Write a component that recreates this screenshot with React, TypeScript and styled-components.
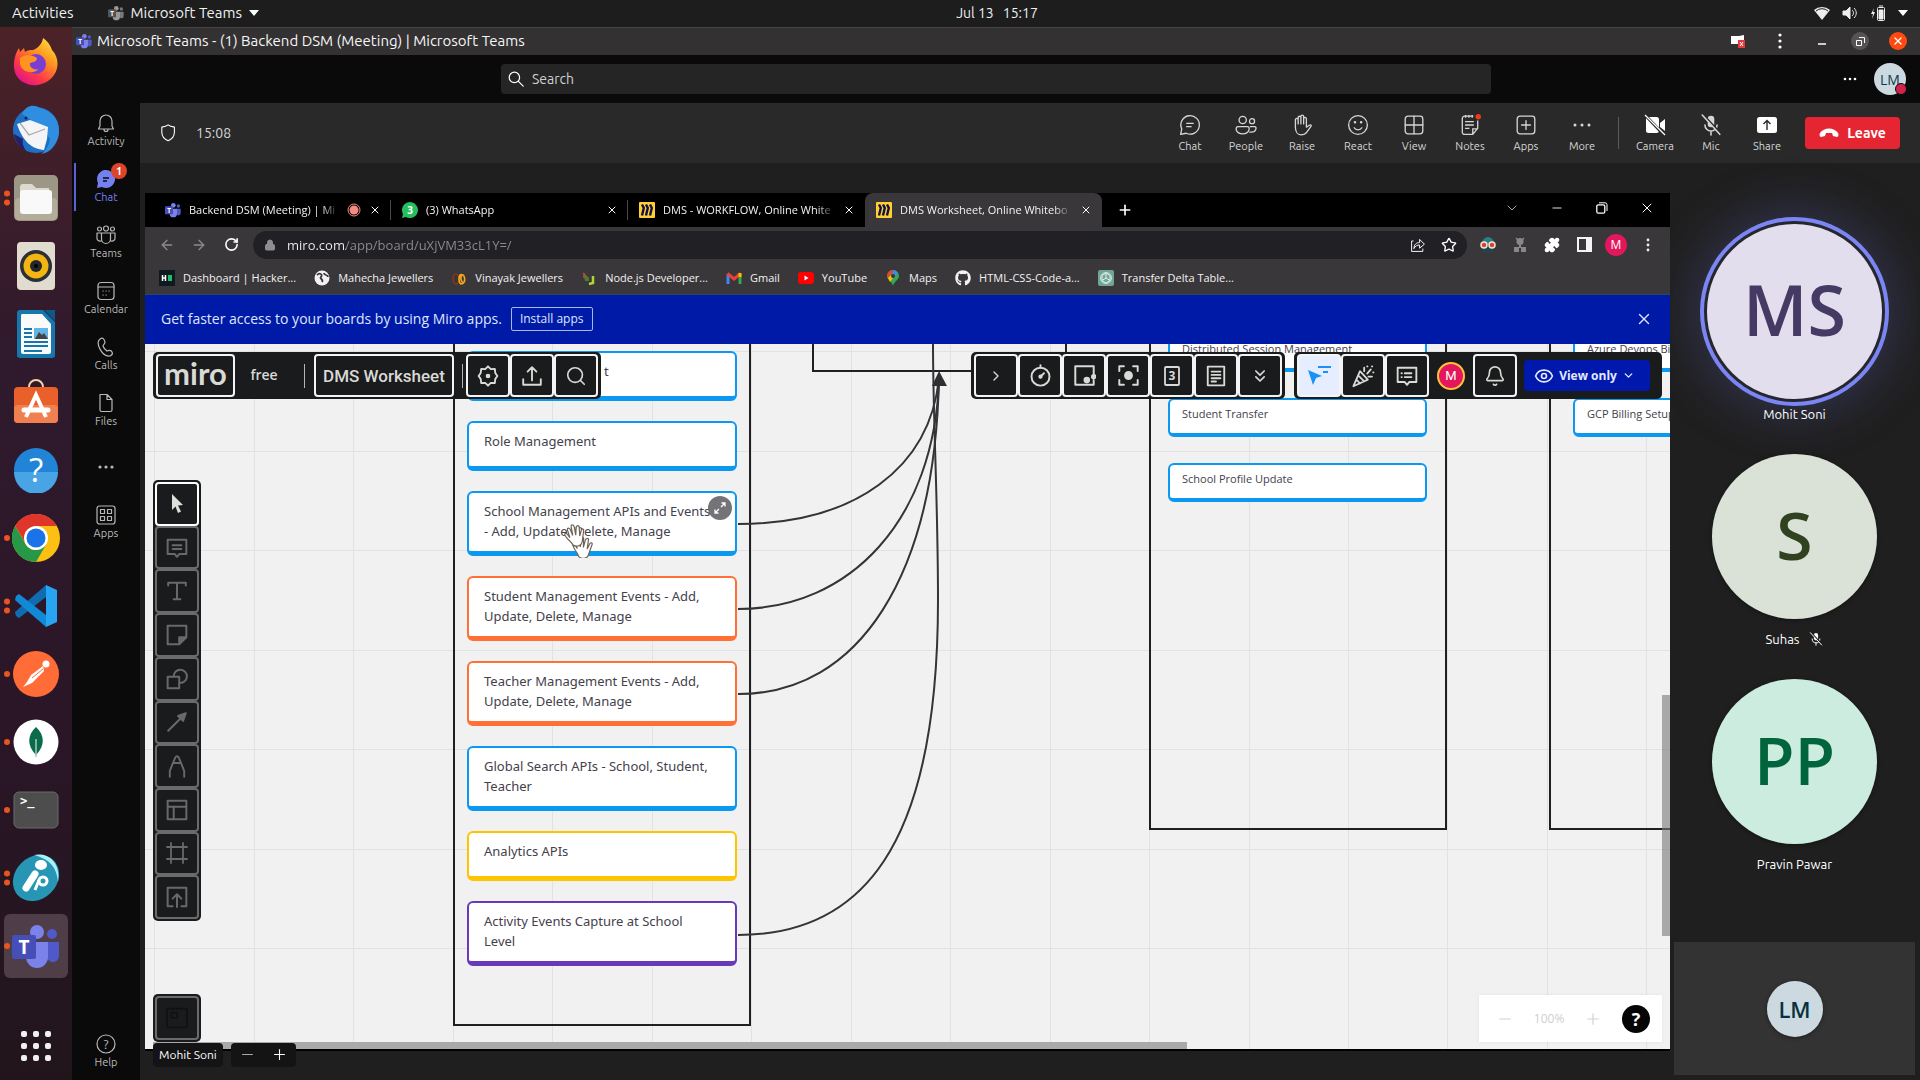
import React from "react";
import styled, { createGlobalStyle, css } from "styled-components";
import {
  ArrowLeft, ArrowRight, RotateCw, Lock, Star, X, Plus, Minus, ChevronDown, ChevronRight, ChevronsDown,
  Search, Bell, Eye, Frame, Puzzle,
} from "lucide-react";
import { FaGithub } from "react-icons/fa";

const Global = createGlobalStyle`
  *, *::before, *::after { box-sizing: border-box; }
  html, body { margin: 0; background: #1f1f1f; }
  body { font-family: Ubuntu, "Noto Sans", "Open Sans", sans-serif; color: #fff; overflow: hidden; }
  button, input { font: inherit; color: inherit; background: none; border: 0; padding: 0; margin: 0; }
  button { cursor: pointer; display: inline-flex; align-items: center; justify-content: center; }
  svg { display: block; flex: none; }
  h1, p { margin: 0; font-weight: 400; }
`;

/* ---------- Shell ---------- */

const Desktop = styled.div`
  display: grid;
  grid-template: 27px minmax(0, 1fr) / 72px minmax(0, 1fr);
  height: 100vh;
`;

const SystemBar = styled.header`
  grid-column: 1 / -1;
  display: grid;
  grid-template-columns: 1fr auto 1fr;
  align-items: center;
  padding: 0 12px 2px;
  background: #1d1d1d;
  font-size: 15px;
  line-height: 20px;
  color: #f0f0f0;
`;
const SystemGroup = styled.div<{ $end?: boolean }>`
  display: flex;
  align-items: center;
  gap: ${(p) => (p.$end ? 12 : 6)}px;
  justify-content: ${(p) => (p.$end ? "flex-end" : "flex-start")};
`;
const AppMenu = styled.button`
  gap: 7px;
  margin-left: 28px;
`;
const Clock = styled.time`
  display: flex;
  gap: 9px;
  padding-left: 74px;
  font-size: 14px;
`;

const Dock = styled.nav`
  display: flex;
  flex-direction: column;
  justify-content: space-between;
  padding-top: 1px;
  background: linear-gradient(#4c2227, #301a2d 30%, #2b1628 65%, #21151b);
`;
const DockButton = styled.button<{ $active?: boolean }>`
  position: relative;
  width: 64px;
  height: 64px;
  margin: 2px 4px;
  border-radius: 6px;
  background: ${(p) => (p.$active ? "#4f3e48" : "none")};
`;
const Running = styled.span`
  position: absolute;
  left: 0;
  top: 50%;
  display: grid;
  gap: 3px;
  transform: translateY(-50%);
  i { width: 6px; height: 6px; border-radius: 50%; background: #e95420; }
`;

const Window = styled.div`
  display: grid;
  grid-template: 28px 48px minmax(0, 1fr) / 68px minmax(0, 1fr);
`;
const TitleBar = styled.div`
  grid-column: 1 / -1;
  display: flex;
  align-items: center;
  gap: 5px;
  padding: 0 13px 1px 4px;
  border-top: 1px solid #464344;
  background: #333132;
`;
const WindowTitle = styled.h1`
  flex: 1;
  font-size: 15px;
  line-height: 20px;
  color: #f6f6f6;
`;
const TitleActions = styled.div`
  display: flex;
  align-items: center;
  gap: 20px;
`;
const MenuButton = styled.button`
  width: 26px;
`;
const RoundButton = styled.button<{ $bg: string }>`
  width: 18px;
  height: 18px;
  border-radius: 50%;
  background: ${(p) => p.$bg};
`;

const SearchRow = styled.div`
  grid-column: 1 / -1;
  display: grid;
  grid-template-columns: 1fr minmax(0, 990px) 1fr;
  align-items: center;
  padding: 0 14px;
  background: #0a0a0a;
`;
const SearchBox = styled.label`
  grid-column: 2;
  display: flex;
  align-items: center;
  gap: 8px;
  height: 30px;
  padding: 0 7px;
  border-radius: 4px;
  background: #252525;
  font-size: 14px;
  input { flex: 1; outline: 0; }
  input::placeholder { color: #d0d0d0; opacity: 1; }
`;
const SearchEnd = styled.div`
  display: flex;
  align-items: center;
  justify-content: flex-end;
  gap: 17px;
`;
const Profile = styled.button`
  position: relative;
  width: 32px;
  height: 32px;
  border-radius: 50%;
  background: #cdd9e0;
  color: #0b3d4c;
  font: 500 14px "Open Sans", sans-serif;
`;
const Presence = styled.span`
  position: absolute;
  right: -1px;
  bottom: 0;
  width: 12px;
  height: 12px;
  border: 1px solid #0a0a0a;
  border-radius: 50%;
  background: #d2254a;
`;

const Rail = styled.nav`
  display: flex;
  flex-direction: column;
  background: #0a0a0a;
`;
const RailButton = styled.button<{ $active?: boolean; $last?: boolean }>`
  position: relative;
  flex-direction: column;
  gap: 1px;
  width: 100%;
  height: 56px;
  font-size: 11px;
  line-height: 15px;
  color: ${(p) => (p.$active ? "#7580f0" : "#b8b8b8")};
  margin-top: ${(p) => (p.$last ? "auto" : "0")};
  ${(p) => p.$active && css`
    &::before {
      content: "";
      position: absolute;
      left: 2px;
      top: 4px;
      bottom: 4px;
      width: 2px;
      background: #5b62d6;
    }
  `}
`;
const CountBadge = styled.span`
  position: absolute;
  left: 39px;
  top: 4px;
  width: 16px;
  height: 16px;
  border-radius: 50%;
  background: #dc442c;
  color: #fff;
  font-weight: 700;
  line-height: 16px;
`;

const Meeting = styled.main`
  display: grid;
  grid-template-rows: 60px minmax(0, 1fr);
  background: #1f1f1f;
`;
const CallBar = styled.div`
  display: flex;
  align-items: center;
  padding: 0 20px;
  background: #292929;
`;
const Elapsed = styled.span`
  flex: 1;
  margin-left: 18px;
  font-size: 14px;
  color: #d6d6d6;
`;
const CallButton = styled.button`
  flex-direction: column;
  gap: 2px;
  width: 56px;
  padding-top: 1px;
  font-size: 11px;
  line-height: 16px;
  color: #d6d6d6;
`;
const CallDivider = styled.span`
  width: 1px;
  height: 32px;
  margin: 0 8px;
  background: #5c5c5c;
`;
const Leave = styled.button`
  gap: 8px;
  width: 95px;
  height: 32px;
  margin-left: 10px;
  border-radius: 4px;
  background: #e62533;
  font-size: 14px;
  font-weight: 700;
`;

const Stage = styled.div`
  display: grid;
  grid-template-columns: minmax(0, 1fr) 250px;
  min-height: 0;
`;
const ShareArea = styled.section`
  position: relative;
  display: flex;
  padding: 30px 0 29px 5px;
  min-height: 0;
`;
const ShareControls = styled.div`
  position: absolute;
  left: 13px;
  bottom: 13px;
  display: flex;
  gap: 8px;
`;
const ShareChip = styled.div<{ $tools?: boolean }>`
  display: flex;
  align-items: center;
  gap: 15px;
  height: 24px;
  padding: 0 ${(p) => (p.$tools ? 8 : 6)}px 2px;
  border-radius: 4px;
  background: #141414;
  font-size: 12px;
`;

const People = styled.aside`
  display: flex;
  flex-direction: column;
  padding: 38px 5px 5px 4px;
`;
const Person = styled.figure`
  display: flex;
  flex-direction: column;
  align-items: center;
  height: 225px;
  margin: 0;
  font-size: 13px;
  line-height: 18px;
`;
const FaceArea = styled.div`
  display: flex;
  flex-direction: column;
  justify-content: center;
  height: 204px;
  padding-top: 16px;
`;
const Face = styled.div<{ $bg: string; $fg: string; $size: number; $speaking?: boolean }>`
  display: flex;
  align-items: center;
  justify-content: center;
  width: ${(p) => p.$size}px;
  height: ${(p) => p.$size}px;
  padding-bottom: ${(p) => (p.$size > 100 ? 4 : 0)}px;
  border-radius: 50%;
  background: ${(p) => p.$bg};
  color: ${(p) => p.$fg};
  font: 600 ${(p) => Math.round(p.$size * 0.4)}px "Open Sans", sans-serif;
  box-shadow: ${(p) => (p.$speaking ? "0 0 0 3px #26262e, 0 0 0 7px #7b86f4, 0 0 50px 16px rgba(98,100,190,.28)" : "0 1px 4px rgba(0,0,0,.4)")};
`;
const PersonName = styled.figcaption`
  display: flex;
  align-items: center;
  gap: 10px;
`;
const SelfView = styled.div`
  display: flex;
  align-items: center;
  justify-content: center;
  height: 133px;
  margin-top: auto;
  background: #333;
`;

/* ---------- Shared browser ---------- */

const Browser = styled.div`
  flex: 1;
  min-width: 0;
  display: flex;
  flex-direction: column;
  border-bottom: 2px solid #000;
  background: #39373a;
  font-family: "Segoe UI", "Open Sans", sans-serif;
`;
const TabStrip = styled.div`
  display: flex;
  align-items: center;
  height: 34px;
  padding-left: 9px;
  background: #000;
`;
const Tab = styled.div<{ $active?: boolean; $rule?: boolean }>`
  display: flex;
  align-items: center;
  gap: 8px;
  width: 237px;
  height: 34px;
  padding: 0 10px 1px 11px;
  border-radius: 8px 8px 0 0;
  background: ${(p) => (p.$active ? "#39373a" : p.$rule ? "linear-gradient(#4a4a4a, #4a4a4a) right center / 1px 20px no-repeat" : "none")};
`;
const TabTitle = styled.span`
  flex: 1;
  overflow: hidden;
  white-space: nowrap;
  font-size: 11px;
  color: #f2f2f2;
  mask-image: linear-gradient(90deg, #000 calc(100% - 18px), transparent);
`;
const NewTab = styled.button`
  width: 46px;
  height: 34px;
`;
const WindowControls = styled.div`
  display: flex;
  margin: 0 1px 4px auto;
  button { width: 45px; height: 30px; }
`;
const AddressRow = styled.div`
  display: flex;
  align-items: center;
  height: 36px;
  padding: 0 6px 1px;
`;
const NavButton = styled.button`
  width: 32px;
  height: 28px;
`;
const Omnibox = styled.label`
  flex: 1;
  display: flex;
  align-items: center;
  gap: 11px;
  height: 28px;
  margin: 0 5px 0 6px;
  padding: 0 8px 0 11px;
  border-radius: 14px;
  background: #212024;
  font-size: 13px;
  input {
    flex: 1;
    outline: 0;
    color: transparent;
    background: linear-gradient(90deg, #f2f2f2 59px, #8d8d90 59px);
    background-clip: text;
    -webkit-background-clip: text;
  }
  ${NavButton} { width: 20px; }
`;
const Initial = styled.span`
  display: grid;
  place-items: center;
  width: 22px;
  height: 22px;
  border-radius: 50%;
  background: #e3175c;
  font-size: 12px;
`;
const Bookmarks = styled.nav`
  display: flex;
  align-items: center;
  gap: 18px;
  height: 32px;
  padding: 0 14px 2px;
  border-bottom: 1px solid #2c4560;
`;
const Bookmark = styled.a`
  display: flex;
  align-items: center;
  gap: 8px;
  color: #f2f2f2;
  font-size: 11px;
  line-height: 16px;
  text-decoration: none;
  white-space: nowrap;
`;
const Banner = styled.div`
  display: flex;
  align-items: center;
  gap: 9px;
  height: 49px;
  padding: 0 17px 2px 16px;
  background: #001aa8;
  font-family: "Open Sans", sans-serif;
  font-size: 14px;
  color: #dfe6ff;
  > :last-child { margin-left: auto; }
`;
const InstallButton = styled.button`
  height: 24px;
  padding: 0 8px;
  border: 1px solid #a8b8ee;
  border-radius: 2px;
  font-size: 12px;
`;

/* ---------- Board ---------- */

const Board = styled.div`
  position: relative;
  flex: 1;
  overflow: hidden;
  background: #f1f1f2;
  font-family: "Open Sans", sans-serif;
`;
const BoardDrawing = styled.svg`
  position: absolute;
  left: 0;
  top: 0;
`;
const Column = styled.div<{ $x: number; $y: number; $w: number }>`
  position: absolute;
  left: ${(p) => p.$x}px;
  top: ${(p) => p.$y}px;
  width: ${(p) => p.$w}px;
  display: grid;
  gap: ${(p) => (p.$w > 260 ? 20 : 26)}px;
`;
const Card = styled.article<{ $color: string; $small?: boolean; $tall?: boolean }>`
  position: relative;
  height: ${(p) => (p.$small ? 39 : p.$tall ? 65 : 50)}px;
  padding: ${(p) => (p.$small ? "6px 12px" : "8px 15px")};
  border: 2px solid ${(p) => p.$color};
  border-bottom-width: ${(p) => (p.$small ? 4 : 5)}px;
  border-radius: 6px;
  background: #fff;
  color: #44414c;
  font-family: ${(p) => (p.$small ? `"Open Sans"` : `"Noto Sans"`)}, sans-serif;
  font-size: ${(p) => (p.$small ? 11 : 13)}px;
  line-height: ${(p) => (p.$small ? 16 : 20)}px;
  white-space: pre;
`;
const CardTail = styled.span`
  padding-left: 120px;
`;
const Expand = styled.button`
  position: absolute;
  right: 3px;
  top: 3px;
  width: 24px;
  height: 24px;
  border-radius: 50%;
  background: rgba(92, 92, 96, .85);
`;
const Cursor = styled.svg`
  position: absolute;
  left: 418px;
  top: 178px;
`;

const Panel = styled.div`
  display: flex;
  align-items: center;
  height: 47px;
  padding: 0 3px;
  border-radius: 5px;
  background: #1a1b1d;
  color: #d9d9d6;
`;
const PanelRow = styled.div`
  position: absolute;
  top: 8px;
  left: 8px;
  right: 8px;
  display: flex;
  gap: 9px;
  > :nth-child(2) { margin-left: auto; }
`;
const Tool = styled.button<{ $w?: number; $lit?: boolean }>`
  width: ${(p) => p.$w ?? 44}px;
  height: 43px;
  border: 2px solid #f4f4f4;
  border-radius: 4px;
  background: ${(p) => (p.$lit ? "#e6edff" : "#1a1b1d")};
`;
const Wordmark = styled.span`
  font: 700 31px/30px Lato, sans-serif;
  padding-bottom: 5px;
`;
const BoardName = styled.span`
  font: 500 17px Roboto, sans-serif;
`;
const Plan = styled.span`
  width: 58px;
  margin-right: 11px;
  padding-bottom: 2px;
  text-align: center;
  font-size: 14px;
  font-weight: 600;
`;
const Rule = styled.span<{ $lead?: number; $tail: number }>`
  width: 1px;
  height: 24px;
  margin: 0 ${(p) => p.$tail}px 0 ${(p) => p.$lead ?? 0}px;
  background: #b5b5b5;
`;
const Member = styled.button`
  width: 28px;
  height: 28px;
  margin: 0 8px;
  border: 2px solid #ffc23d;
  border-radius: 50%;
  background: #e3175c;
  font: 13px Roboto, sans-serif;
  color: #fff;
`;
const ViewOnly = styled.button`
  gap: 5px;
  width: 126px;
  height: 31px;
  margin: 0 9px 0 7px;
  padding-right: 5px;
  border-radius: 4px;
  background: #0019ac;
  font-size: 12px;
  font-weight: 700;
  color: #e4e9ff;
`;
const Palette = styled.div`
  position: absolute;
  left: 8px;
  top: 136px;
  display: flex;
  flex-direction: column;
  height: 441px;
  width: 48px;
  padding: 2px;
  border-radius: 5px;
  background: #1a1b1d;
`;
const PaletteTool = styled.button<{ $on?: boolean }>`
  flex: 1;
  border: 2px solid ${(p) => (p.$on ? "#fff" : "#6b6b6d")};
  border-radius: 4px;
  color: ${(p) => (p.$on ? "#dededb" : "#69696b")};
`;
const MiniMap = styled(Palette)`
  top: auto;
  bottom: 7px;
  height: 48px;
  button { color: #101112; }
`;
const ZoomBar = styled.div`
  position: absolute;
  right: 8px;
  bottom: 7px;
  display: flex;
  align-items: center;
  justify-content: space-between;
  width: 183px;
  height: 47px;
  padding: 0 12px 0 17px;
  background: #fff;
  box-shadow: 0 0 4px rgba(0, 0, 0, .06);
  color: #cfcfcf;
  font-size: 12px;
`;
const HelpButton = styled.button`
  width: 28px;
  height: 28px;
  border-radius: 50%;
  background: #050505;
  color: #fff;
  font-size: 18px;
  font-weight: 700;
`;
const ScrollX = styled.div`
  position: absolute;
  left: 8px;
  bottom: 0;
  width: 1034px;
  height: 7px;
  background: #a9a9a9;
`;
const ScrollY = styled.div`
  position: absolute;
  right: 0;
  top: 351px;
  width: 8px;
  height: 241px;
  background: rgba(120, 120, 122, .6);
`;

/* ---------- Drawings ---------- */

type IconProps = { size?: number; children?: React.ReactNode; sw?: number; vb?: number };
const Line = ({ size = 20, children, sw = 1.2, vb = 20 }: IconProps) => (
  <svg width={size} height={size} viewBox={`0 0 ${vb} ${vb}`} fill="none" stroke="currentColor" strokeWidth={sw} strokeLinecap="round" strokeLinejoin="round" aria-hidden="true">
    {children}
  </svg>
);
const Dots = ({ vertical }: { vertical?: boolean }) => (
  <svg width="20" height="20" viewBox="0 0 20 20" fill="currentColor">
    {[4, 10, 16].map((n) => <circle key={n} cx={vertical ? 10 : n} cy={vertical ? n : 10} r="1.6" />)}
  </svg>
);

const TeamsLogo = ({ size, grey }: { size: number; grey?: boolean }) => (
  <svg width={size} height={size} viewBox="0 0 48 48">
    <circle cx="40" cy="12" r="5" fill={grey ? "#777" : "#5059c9"} />
    <path d="M35 20h12v13a6 6 0 0 1-12 2z" fill={grey ? "#777" : "#5059c9"} />
    <circle cx="25" cy="10" r="7" fill={grey ? "#999" : "#7b83eb"} />
    <path d="M14 20h22v15a11 11 0 0 1-22 0z" fill={grey ? "#999" : "#7b83eb"} />
    <rect x="0" y="13" width="24" height="24" rx="2" fill={grey ? "#555" : "#464eb8"} />
    <text x="12" y="32" textAnchor="middle" fontFamily="Open Sans, sans-serif" fontWeight="700" fontSize="19" fill="#fff">T</text>
  </svg>
);

const MiroMark = () => (
  <svg width="16" height="16" viewBox="0 0 16 16">
    <rect width="16" height="16" rx="1" fill="#ffd02f" />
    <path d="M3 2.500l1.800 3.500L3 13.500M7 2.500l1.800 3.500L7 13.500M11 2.500l1.800 3.500-1.800 7.500" stroke="#12104a" strokeWidth="2.400" fill="none" />
  </svg>
);

const MicOff = ({ size = 20, back = "#292929" }: { size?: number; back?: string }) => (
  <svg width={size} height={size} viewBox="0 0 20 20" fill="none" stroke="currentColor" strokeWidth="1.4" strokeLinecap="round">
    <rect x="7" y="1.5" width="6" height="10.5" rx="3" fill="currentColor" stroke="none" />
    <path d="M4.5 10a5.5 5.5 0 0 0 11 0M10 15.5V19" />
    <path d="M3 1l16 17" stroke={back} strokeWidth="2" />
    <path d="M2 1l16 17.500" />
  </svg>
);

const ChatBubble = () => (
  <Line size={22}><path d="M1.500 18.500l1-5A8.400 8.400 0 1 1 6.500 17.500zM7 8.500h6M7 11.500h4" /></Line>
);

const dockItems: { name: string; dots: number; active?: boolean; art: React.ReactNode }[] = [
  {
    name: "Firefox", dots: 0,
    art: (
      <svg width="46" height="50" viewBox="0 0 46 50">
        <defs>
          <linearGradient id="ff" x1="1" y1="0" x2=".3" y2="1"><stop offset="0" stopColor="#fff04a" /><stop offset=".4" stopColor="#ff9a1f" /><stop offset=".75" stopColor="#ff3b45" /><stop offset="1" stopColor="#e31587" /></linearGradient>
        </defs>
        <path d="M30 1c6 4 8 9 9 12 7 7 7 18 2 25-6 9-19 13-29 8C2 42-1 31 2 20c1-4 2-6 4-9l1 4 4-4 1 4c3-2 5-2 8-2 5-2 9-6 10-12z" fill="url(#ff)" />
        <circle cx="23" cy="27" r="10" fill="#7a3fd2" />
        <path d="M7 21c6-4 12-3 17 0 0 4-4 4-7 5-1 4 4 8 9 6-7 6-17 3-19-5z" fill="#ff9520" />
      </svg>
    ),
  },
  {
    name: "Thunderbird", dots: 0,
    art: (
      <svg width="48" height="52" viewBox="0 0 48 52">
        <circle cx="24" cy="26" r="23" fill="#1f6fc4" />
        <path d="M10 10c4-9 12-10 18-6 14 3 20 14 19 26-2 12-10 19-18 20 7-5 8-10 9-15-8-13-18-18-28-25z" fill="#2f8ee0" />
        <path d="M5 20l13-4 18 7-1 12-3 11C20 45 11 38 5 20z" fill="#f4f4f6" />
        <path d="M8 19l9 12 16-6" fill="none" stroke="#aaa" strokeWidth="1.300" />
        <path d="M2 30c1 8 6 14 12 17-3-5-4-8-3-12z" fill="#26206b" />
        <circle cx="14" cy="14" r="1.500" fill="#0b2b55" />
      </svg>
    ),
  },
  {
    name: "Files", dots: 2,
    art: (
      <svg width="46" height="48" viewBox="0 0 46 48">
        <rect x="1" y="1" width="44" height="46" rx="5" fill="#9c9684" /><rect x="2" y="24" width="42" height="22" rx="4" fill="#b3ac99" />
        <path d="M7 13a3 3 0 0 1 3-3h9l4 4h13v8H7z" fill="#dcd9cf" />
        <rect x="7" y="16" width="32" height="24" rx="3" fill="#f9f9f9" />
      </svg>
    ),
  },
  {
    name: "Rhythmbox", dots: 0,
    art: (
      <svg width="38" height="48" viewBox="0 0 38 48">
        <rect width="38" height="48" rx="4" fill="#e0dcd0" /><circle cx="19" cy="24" r="16" fill="#2c2f36" />
        <circle cx="19" cy="24" r="12.500" fill="#f3b512" /><circle cx="19" cy="24" r="6" fill="#24272b" /><circle cx="19" cy="24" r="2" fill="#000" />
      </svg>
    ),
  },
  {
    name: "LibreOffice Writer", dots: 0,
    art: (
      <svg width="38" height="48" viewBox="0 0 38 48">
        <path d="M3 0h23l12 12v33a3 3 0 0 1-3 3H3a3 3 0 0 1-3-3V3a3 3 0 0 1 3-3z" fill="#1677ad" />
        <path d="M5 4h20l9 10v28a2 2 0 0 1-2 2H6a2 2 0 0 1-2-2V5z" fill="#fafafa" /><path d="M27 0h11v11z" fill="#0d5884" />
        <path d="M7 19h8M7 23h8M7 27h8M7 32h24M7 36h24M7 41h18" stroke="#1677ad" strokeWidth="2" />
        <rect x="17" y="18" width="14" height="11" fill="#62b4e4" /><path d="M18 29l4-7 3 3 2-2 4 6z" fill="#444" />
      </svg>
    ),
  },
  {
    name: "Ubuntu Software", dots: 0,
    art: (
      <svg width="46" height="46" viewBox="0 0 46 46">
        <path d="M16 12V8a7 7 0 0 1 14 0v4" fill="none" stroke="#f5d3a4" strokeWidth="2" />
        <rect x="1" y="8" width="44" height="36" rx="4" fill="#e9602a" /><rect x="1" y="26" width="44" height="18" rx="4" fill="#f08050" />
        <path d="M13 38l10-22 10 22" fill="none" stroke="#fff" strokeWidth="4" /><path d="M11 31h24" stroke="#fff" strokeWidth="5" strokeLinecap="round" />
      </svg>
    ),
  },
  {
    name: "Help", dots: 0,
    art: (
      <svg width="46" height="46" viewBox="0 0 46 46">
        <circle cx="23" cy="23" r="22" fill="#2284d6" /><path d="M1 25h44a22 22 0 0 1-44 0z" fill="#48a4e4" />
        <text x="23" y="35" textAnchor="middle" fontSize="33" fontFamily="Open Sans, sans-serif" fill="#fff">?</text>
      </svg>
    ),
  },
  {
    name: "Google Chrome", dots: 1,
    art: (
      <svg width="48" height="48" viewBox="0 0 48 48">
        <circle cx="24" cy="24" r="24" fill="#fbc011" />
        <path d="M3.200 12A24 24 0 0 1 44.800 12H24L14 30z" fill="#e0352b" />
        <path d="M3.200 12A24 24 0 0 0 24 48l10.400-18L24 36a12 12 0 0 1-10.400-6z" fill="#279847" />
        <circle cx="24" cy="24" r="12" fill="#fff" /><circle cx="24" cy="24" r="9.500" fill="#1a73e8" />
      </svg>
    ),
  },
  {
    name: "Visual Studio Code", dots: 2,
    art: (
      <svg width="42" height="42" viewBox="0 0 42 42">
        <path d="M31 0L0 27l1 4 3 2L31 12z" fill="#0f6cb0" /><path d="M31 42L0 15l1-4 3-2 27 21z" fill="#1189d4" />
        <path d="M31 0l11 5v32l-11 5z" fill="#27a5f2" />
      </svg>
    ),
  },
  {
    name: "Postman", dots: 1,
    art: (
      <svg width="46" height="46" viewBox="0 0 46 46">
        <circle cx="23" cy="23" r="23" fill="#ff6c37" /><circle cx="33" cy="13" r="3.500" fill="#fff" />
        <path d="M30 15l-12 9-4 7-4 5 9-4 12-12z" fill="#fff" /><path d="M19 27l11-9" stroke="#ff6c37" />
      </svg>
    ),
  },
  {
    name: "MongoDB Compass", dots: 1,
    art: (
      <svg width="46" height="46" viewBox="0 0 46 46">
        <circle cx="23" cy="23" r="22.500" fill="#fff" /><path d="M23 8c9 8 9 19 0 28-9-9-9-20 0-28z" fill="#0a6b4b" /><path d="M23 20v18" stroke="#a9c9bd" strokeWidth="1.500" />
      </svg>
    ),
  },
  {
    name: "Terminal", dots: 1,
    art: (
      <svg width="46" height="38" viewBox="0 0 46 38">
        <rect x="1" y="1" width="44" height="36" rx="5" fill="#4d4d4d" stroke="#6b6b6b" />
        <text x="7" y="14" fontFamily="DejaVu Sans Mono, monospace" fontWeight="700" fontSize="12" fill="#fff">&gt;_</text>
      </svg>
    ),
  },
  {
    name: "IP Messenger", dots: 2,
    art: (
      <svg width="48" height="48" viewBox="0 0 48 48">
        <ellipse cx="24" cy="24" rx="25" ry="21" transform="rotate(-45 24 24)" fill="#2796b4" />
        <path d="M22 1c14-3 27 7 24 27-1-14-8-23-24-27z" fill="#a9f1f5" />
        <ellipse cx="29" cy="11" rx="6" ry="5" fill="#fff" /><path d="M23 20l-9 14" stroke="#fff" strokeWidth="7" strokeLinecap="round" />
        <circle cx="31" cy="27" r="4" fill="none" stroke="#fff" strokeWidth="3" /><path d="M27 26l-4 10" stroke="#fff" strokeWidth="3" />
      </svg>
    ),
  },
  { name: "Microsoft Teams", dots: 1, active: true, art: <TeamsLogo size={48} /> },
];

const railItems: { label: string; active?: boolean; badge?: string; icon: React.ReactNode }[] = [
  { label: "Activity", icon: <Line><path d="M4 13V8a6 6 0 0 1 12 0v5l1.500 3h-15zM8 16.500a2 2 0 0 0 4 0" /></Line> },
  {
    label: "Chat", active: true, badge: "1",
    icon: <svg width="20" height="20" viewBox="0 0 20 20"><path d="M1 19l1-5A9 9 0 1 1 6 18z" fill="#7580f0" /><path d="M7 9h6M7 12h4" stroke="#0a0a0a" strokeWidth="1.300" /></svg>,
  },
  { label: "Teams", icon: <Line><circle cx="3.500" cy="4" r="2" /><circle cx="10" cy="3.500" r="2.500" /><circle cx="16.500" cy="4" r="2" /><path d="M5.500 8h9v6a4.500 4.500 0 0 1-9 0zM5 8H1v5a3 3 0 0 0 4 3M15 8h4v5a3 3 0 0 1-4 3" /></Line> },
  { label: "Calendar", icon: <Line><rect x="2" y="1.500" width="16" height="17" rx="3" /><path d="M2 6h16M7 10h.2M10 10h.2M13 10h.2M7 14h.2M10 14h.2" /></Line> },
  { label: "Calls", icon: <Line><path d="M4 2c3-2 4 0 5 3 0 2-2 3-2 4 1 3 3 4 4 5 2-1 4-1 5 1 1 2 0 3-2 4C6 20-1 6 4 2z" /></Line> },
  { label: "Files", icon: <Line><path d="M4 1.500h7l5 5V17a1.500 1.500 0 0 1-1.500 1.500h-9A1.500 1.500 0 0 1 4 17zM11 1.500V6.500h5" /></Line> },
  { label: "", icon: <Dots /> },
  { label: "Apps", icon: <Line><rect x="1" y="1" width="18" height="18" rx="2.500" /><rect x="4.500" y="4.500" width="4" height="4" /><rect x="11.500" y="4.500" width="4" height="4" /><rect x="4.500" y="11.500" width="4" height="4" /><rect x="11.500" y="11.500" width="4" height="4" /></Line> },
];

const callActions: [string, React.ReactNode][] = [
  ["Chat", <ChatBubble />],
  ["People", <Line size={22}><circle cx="7" cy="5.500" r="3.300" /><circle cx="15.500" cy="6.500" r="2.300" /><path d="M3 11.500h8.500c2.500 0 2 6.500-4.500 6.500S-.5 11.500 3 11.500zM14 11.500h4c2 0 1.500 5-3 5h-1.500" /></Line>],
  ["Raise", <Line size={22}><path d="M4 12V5a1.300 1.300 0 0 1 2.500 0v4V3A1.300 1.300 0 0 1 9 3v6V2a1.300 1.300 0 0 1 2.500 0v7V4A1.300 1.300 0 0 1 14 4v8l3-2c1-.5 2 .5 1 1.500L14 17c-1 1.500-3 2-5 2-3 0-5-3-5-7z" /></Line>],
  ["React", <Line size={22}><circle cx="10" cy="10" r="8.500" /><path d="M6.500 12.500c1.500 2.500 5.500 2.500 7 0" /><path d="M7.200 7.500h.1M12.800 7.500h.1" strokeWidth="2.200" /></Line>],
  ["View", <Line size={22}><rect x="2" y="2" width="16" height="16" rx="2.500" /><path d="M10 2v16M2 10h16" /></Line>],
  ["Notes", <svg width="22" height="22" viewBox="0 0 20 20" fill="none" stroke="currentColor" strokeWidth="1.200"><path d="M17 6v7l-4.500 5.500H5a2 2 0 0 1-2-2V4a2 2 0 0 1 2-2h8M12.500 18v-4.500H17M5.500 7h8M5.500 10h8M5.500 13h4M6 1v2.500M9 1v2.500M12 1v2.500" /><circle cx="17.500" cy="2.500" r="2.500" fill="#f03a17" stroke="none" /></svg>],
  ["Apps", <Line size={22}><rect x="2" y="2" width="16" height="16" rx="2.500" /><path d="M10 6v8M6 10h8" /></Line>],
  ["More", <svg width="22" height="22" viewBox="0 0 22 22" fill="currentColor"><circle cx="4" cy="11" r="1.500" /><circle cx="11" cy="11" r="1.500" /><circle cx="18" cy="11" r="1.500" /></svg>],
];
const deviceActions: [string, React.ReactNode][] = [
  ["Camera", <svg width="22" height="22" viewBox="0 0 22 22"><rect x="2" y="3" width="13" height="16" rx="2.500" fill="#fff" /><path d="M16 9l5-4v12l-5-4z" fill="#fff" /><path d="M2 2l18 19" stroke="#292929" strokeWidth="3" /><path d="M1 1l20 20" stroke="#fff" strokeWidth="1.300" /></svg>],
  ["Mic", <MicOff size={22} />],
  ["Share", <svg width="22" height="22" viewBox="0 0 22 22"><rect x="1" y="3" width="20" height="16" rx="2.500" fill="#fff" /><path d="M11 16V6.500M7.500 10L11 6.500l3.500 3.500" stroke="#292929" strokeWidth="1.400" fill="none" /></svg>],
];

const bookmarks: [string, React.ReactNode][] = [
  ["Dashboard | Hacker...", <svg width="16" height="16"><rect width="16" height="16" fill="#0e1a20" /><path d="M3.500 5v6M6.500 5v6M3.500 8h3" stroke="#fff" strokeWidth="1.500" /><rect x="9" y="5" width="4" height="6" fill="#1ebd67" /></svg>],
  ["Mahecha Jewellers", <svg width="16" height="16"><circle cx="8" cy="8" r="7.500" fill="#f1f1f1" /><path d="M3 5c3-3 6 0 4 2s3 2 1 5M10 3c0 3 4 1 4 4" stroke="#39373a" strokeWidth="1.800" fill="none" /></svg>],
  ["Vinayak Jewellers", <svg width="16" height="16" fill="none"><ellipse cx="5" cy="9" rx="3" ry="5" stroke="#8c3715" strokeWidth="1.500" /><path d="M9 5c5-3 7 9 1 9-3-2-2-7-1-9zM11 4c-2 4-1 7 1 9" stroke="#f3a51c" strokeWidth="1.700" /></svg>],
  ["Node.js Developer...", <svg width="16" height="16" fill="none"><path d="M2 2l6 6v3H4z" fill="#4c7d2a" /><path d="M12 6v7l-4 1" stroke="#b3d334" strokeWidth="2.500" /><path d="M3 3v5" stroke="#d4413a" strokeWidth="1.500" /></svg>],
  ["Gmail", <svg width="16" height="16" fill="none"><path d="M2 14V4" stroke="#4285f4" strokeWidth="3" /><path d="M14 14V4" stroke="#34a853" strokeWidth="3" /><path d="M1.500 3.500L8 9l6.500-5.500" stroke="#ea4335" strokeWidth="3" /><path d="M14 3v4" stroke="#fbbc04" strokeWidth="3" /></svg>],
  ["YouTube", <svg width="16" height="16"><rect y="2" width="16" height="12" rx="3" fill="#f00" /><path d="M6.500 5.500l4 2.500-4 2.500z" fill="#fff" /></svg>],
  ["Maps", <svg width="16" height="16"><path d="M8 0a6 6 0 0 1 6 6c0 4-5 5-6 10C7 11 2 10 2 6a6 6 0 0 1 6-6z" fill="#34a853" /><path d="M8 0a6 6 0 0 0-6 6l1 2 6-7z" fill="#ea4335" /><path d="M8 0a6 6 0 0 1 5 3L8 8z" fill="#4285f4" /><path d="M3 8l3-3 2 3-3 4z" fill="#fbbc04" /><circle cx="8" cy="6" r="2" fill="#39373a" /></svg>],
  ["HTML-CSS-Code-a...", <FaGithub size={16} />],
  ["Transfer Delta Table...", <svg width="16" height="16" fill="none" stroke="#e4f2ee"><rect width="16" height="16" rx="2" fill="#6fa597" stroke="none" /><path d="M8 3l4 2.500v5L8 13l-4-2.500v-5zM8 3v5l4 2.500M4 10.500L8 8" /><circle cx="8" cy="8" r="5.500" strokeWidth=".8" /></svg>],
];

const blue = "#0a98f0", orange = "#ff6f36", yellow = "#ffc400", purple = "#683ab7";
const backlog = [
  { text: "", color: blue, tail: "t" },
  { text: "Role Management", color: blue },
  { text: "School Management APIs and Events\n- Add, Update, Delete, Manage", color: blue, open: true },
  { text: "Student Management Events - Add,\nUpdate, Delete, Manage", color: orange },
  { text: "Teacher Management Events - Add,\nUpdate, Delete, Manage", color: orange },
  { text: "Global Search APIs - School, Student,\nTeacher", color: blue },
  { text: "Analytics APIs", color: yellow },
  { text: "Activity Events Capture at School\nLevel", color: purple },
];

const paletteTools: [string, React.ReactNode][] = [
  ["Select", <svg width="20" height="22" viewBox="0 0 20 22"><path d="M5 1l11 11-5 .5 3 6-3 1.500-2.500-6.500L5 17z" fill="currentColor" /></svg>],
  ["Comment", <Line sw={1.8} size={22}><path d="M1.500 2.500h17v13H12l-2 2.500-2-2.500H1.500zM6 7.500h8M6 11h8" /></Line>],
  ["Text", <Line sw={1.8} size={22}><path d="M2 5V2.500h16V5M10 2.500v15M7 17.500h6" /></Line>],
  ["Sticky note", <Line sw={1.8} size={22}><path d="M1.500 1.500h17V12L12 18.500H1.500z" /><path d="M12 18v-6h6z" fill="currentColor" /></Line>],
  ["Shapes", <Line sw={1.8} size={22}><rect x="1.500" y="8" width="10.500" height="10.500" /><path d="M7 7.500a6 6 0 1 1 5.500 6" /></Line>],
  ["Line", <Line sw={1.8} size={22}><path d="M2 18L15 5" /><path d="M18 2l-2.500 7L11 4.500z" fill="currentColor" /></Line>],
  ["Pen", <Line sw={1.6} size={24}><path d="M4 19v-5l4.500-11c.8-1.500 2.200-1.500 3 0L16 14v5M7.200 7.500h5.600" /></Line>],
  ["Templates", <Line sw={1.8} size={22}><path d="M1.500 1.500h17v17h-17zM1.500 7h17M7 7v11.500" /></Line>],
  ["Frame", <Frame size={24} strokeWidth={1.800} />],
  ["Upload", <Line sw={1.800} size={22}><path d="M6 18.500H1.500v-17h17v17H14M10 19V8M6 11.500L10 7.500l4 4" /></Line>],
];

const verticals = [9, 109, 208, 308, 407, 507, 606, 706, 805, 905, 1004, 1104, 1203, 1302, 1402, 1501];
const horizontals = [7, 107, 206, 306, 405, 505, 604];

const Diagram = () => (
  <BoardDrawing width="1525" height="705" fill="none">
    <g stroke="#e2e2e5">
      {verticals.map((x) => <path key={x} d={`M${x + 0.5} 0V705`} />)}
      {horizontals.map((y) => <path key={y} d={`M0 ${y + 0.5}H1525`} />)}
    </g>
    <g stroke="#202023" strokeWidth="2">
      <path d="M309 0V681H605V0" />
      <path d="M668 0V27H921V0" />
      <path d="M1005 0V485H1301V0" />
      <path d="M1405 0V485H1525" />
    </g>
    <g stroke="#343437" strokeWidth="2">
      <path d="M593 180C710 180 785 124 794 34" />
      <path d="M593 265C705 265 790 176 794 34" />
      <path d="M593 350C715 350 790 231 794 34" />
      <path d="M593 591C715 591 793 506 793 256C793 156 788 76 788 0" />
    </g>
    <path d="M794 27l8 15h-15z" fill="#2f2f33" />
  </BoardDrawing>
);

const hand = "M6 18C3 15 1 12 0 10c0-2 2-2 3 0l2 3L3 5c0-2 2-2 3 0l2 6-1-9c0-2 2-2 3 0l1 9 1-8c1-2 3-2 3 0l0 9 2-6c1-1 3-1 2 2l-2 10c-1 4-6 5-9 3z";

export default function App() {
  return (
    <>
      <Global />
      <Desktop>
        <SystemBar>
          <SystemGroup>
            <button>Activities</button>
            <AppMenu>
              <TeamsLogo size={16} grey />
              Microsoft Teams
              <svg width="10" height="6"><path d="M0 0h10L5 6z" fill="#fff" /></svg>
            </AppMenu>
          </SystemGroup>
          <Clock><span>Jul 13</span><span>15:17</span></Clock>
          <SystemGroup $end>
            <svg width="16" height="14"><path d="M0 4a12 12 0 0 1 16 0L8 14z" fill="#eee" /><path d="M2 5a9 9 0 0 1 12 0" stroke="#1d1d1d" fill="none" /></svg>
            <svg width="16" height="14" fill="none" stroke="#eee"><path d="M1 5h3l4-4v12L4 9H1z" fill="#eee" /><path d="M10 4c2 2 2 4 0 6M12 2c3 3 3 7 0 10" /></svg>
            <svg width="16" height="16" fill="none" stroke="#eee"><path d="M4 3L1 9h2l-1 5 3-7H3z" fill="#eee" stroke="none" /><rect x="7.500" y="2.500" width="7" height="13" rx="1" /><path d="M9 5h4v9H9zM9 1h4" fill="#eee" /></svg>
            <svg width="10" height="6"><path d="M0 0h10L5 6z" fill="#fff" /></svg>
          </SystemGroup>
        </SystemBar>

        <Dock aria-label="Dock">
          <div>
            {dockItems.map((d) => (
              <DockButton key={d.name} $active={d.active} aria-label={d.name}>
                {d.dots > 0 && <Running>{Array.from({ length: d.dots }, (_, i) => <i key={i} />)}</Running>}
                {d.art}
              </DockButton>
            ))}
          </div>
          <DockButton aria-label="Show applications">
            <svg width="30" height="30" fill="#f0f0f0">
              {[0, 12, 24].flatMap((x) => [0, 12, 24].map((y) => <rect key={`${x}-${y}`} x={x} y={y} width="6" height="6" rx="2" />))}
            </svg>
          </DockButton>
        </Dock>

        <Window>
          <TitleBar>
            <TeamsLogo size={16} />
            <WindowTitle>Microsoft Teams - (1) Backend DSM (Meeting) | Microsoft Teams</WindowTitle>
            <TitleActions>
              <svg width="16" height="14"><path d="M0 2h8l5-1v9H0z" fill="#fff" /><rect x="7" y="6" width="7" height="8" fill="#e5383b" /><path d="M9 8l3 4M12 8l-3 4" stroke="#fff" /></svg>
              <MenuButton aria-label="Menu"><Dots vertical /></MenuButton>
              <RoundButton $bg="none" aria-label="Minimise"><svg width="8" height="8"><path d="M0 7h8" stroke="#fff" strokeWidth="1.500" /></svg></RoundButton>
              <RoundButton $bg="#555354" aria-label="Restore"><svg width="9" height="9" fill="none" stroke="#fff"><path d="M.5 3.500h5v5h-5zM3 .5h5.500V6" /></svg></RoundButton>
              <RoundButton $bg="#ff4b12" aria-label="Close"><X size={12} strokeWidth={2.500} /></RoundButton>
            </TitleActions>
          </TitleBar>

          <SearchRow>
            <SearchBox>
              <Line size={16} sw={1.500}><circle cx="8" cy="8" r="6.500" /><path d="M13 13l6 6" /></Line>
              <input placeholder="Search" aria-label="Search" />
            </SearchBox>
            <SearchEnd>
              <button aria-label="Settings"><svg width="14" height="4" fill="#fff"><circle cx="2" cy="2" r="1.300" /><circle cx="7" cy="2" r="1.300" /><circle cx="12" cy="2" r="1.300" /></svg></button>
              <Profile>LM<Presence /></Profile>
            </SearchEnd>
          </SearchRow>

          <Rail aria-label="Teams">
            {railItems.map((r, i) => (
              <RailButton key={i} $active={r.active} aria-label={r.label || "More"}>
                {r.icon}
                {r.label}
                {r.badge && <CountBadge>{r.badge}</CountBadge>}
              </RailButton>
            ))}
            <RailButton $last>
              <svg width="20" height="20" viewBox="0 0 20 20"><circle cx="10" cy="10" r="9" fill="none" stroke="currentColor" strokeWidth="1.200" /><text x="10" y="15" textAnchor="middle" fontSize="13" fill="currentColor">?</text></svg>
              Help
            </RailButton>
          </Rail>

          <Meeting>
            <CallBar>
              <Line size={18}><path d="M9 1c2 1.500 4 2 7 2.500V9c0 5-3 8-7 9.500C5 17 2 14 2 9V3.500C5 3 7 2.500 9 1z" /></Line>
              <Elapsed>15:08</Elapsed>
              {callActions.map(([label, icon]) => <CallButton key={label}>{icon}{label}</CallButton>)}
              <CallDivider />
              {deviceActions.map(([label, icon]) => <CallButton key={label}>{icon}{label}</CallButton>)}
              <Leave>
                <svg width="20" height="10" viewBox="0 0 20 10"><path d="M1 5c4-6 14-6 18 0 1 2 0 4-1 4l-4-1-1-3H7L6 8 2 9C1 9 0 7 1 5z" fill="#fff" /></svg>
                Leave
              </Leave>
            </CallBar>

            <Stage>
              <ShareArea>
                <Browser>
                  <TabStrip>
                    <Tab $rule>
                      <TeamsLogo size={16} />
                      <TabTitle>Backend DSM (Meeting) | Mi</TabTitle>
                      <svg width="14" height="14"><circle cx="7" cy="7" r="6" fill="none" stroke="#f28b82" /><circle cx="7" cy="7" r="4.500" fill="#f28b82" /></svg>
                      <button aria-label="Close tab"><X size={12} /></button>
                    </Tab>
                    <Tab $rule>
                      <svg width="16" height="16"><path d="M0 16l1-4A8 8 0 1 1 4 15z" fill="#25c05a" /><text x="8" y="12" textAnchor="middle" fontSize="10" fontWeight="700" fill="#fff">3</text></svg>
                      <TabTitle>(3) WhatsApp</TabTitle>
                      <button aria-label="Close tab"><X size={12} /></button>
                    </Tab>
                    <Tab>
                      <MiroMark />
                      <TabTitle>DMS - WORKFLOW, Online White</TabTitle>
                      <button aria-label="Close tab"><X size={12} /></button>
                    </Tab>
                    <Tab $active>
                      <MiroMark />
                      <TabTitle>DMS Worksheet, Online Whitebo</TabTitle>
                      <button aria-label="Close tab"><X size={12} /></button>
                    </Tab>
                    <NewTab aria-label="New tab"><Plus size={16} strokeWidth={2.500} /></NewTab>
                    <WindowControls>
                      <button aria-label="Search tabs"><ChevronDown size={16} strokeWidth={1} /></button>
                      <button aria-label="Minimise"><Minus size={14} strokeWidth={1.500} /></button>
                      <button aria-label="Restore"><svg width="12" height="12" fill="none" stroke="#fff"><rect x=".8" y="2.800" width="8" height="8.400" rx="1.500" strokeWidth="1.300" /><path d="M3 .8h6a2 2 0 0 1 2 2V9" /></svg></button>
                      <button aria-label="Close"><X size={16} strokeWidth={1.500} /></button>
                    </WindowControls>
                  </TabStrip>

                  <AddressRow>
                    <NavButton aria-label="Back"><ArrowLeft size={16} color="#8b8a8c" /></NavButton>
                    <NavButton aria-label="Forward"><ArrowRight size={16} color="#8b8a8c" /></NavButton>
                    <NavButton aria-label="Reload"><RotateCw size={15} strokeWidth={2.500} /></NavButton>
                    <Omnibox>
                      <Lock size={12} color="#8e8e90" fill="#8e8e90" />
                      <input defaultValue="miro.com/app/board/uXjVM33cL1Y=/" aria-label="Address" />
                      <NavButton aria-label="Share"><Line size={16} sw={1.200}><path d="M4 5H2v13h14v-3M5 14c0-5 3-7 7-7V3l6 6-6 5v-4c-3 0-5 1-7 4z" /></Line></NavButton>
                      <NavButton aria-label="Bookmark"><Star size={16} /></NavButton>
                    </Omnibox>
                    <NavButton aria-label="Extension"><svg width="18" height="18"><path d="M3 8a6 7 0 0 1 12 0z" fill="#2b7f84" /><path d="M4 11h10v5H4z" fill="#17494d" /><circle cx="5" cy="9" r="3" fill="#d8452e" stroke="#f4e3da" strokeWidth="1.500" /><circle cx="13" cy="9" r="3" fill="#d8452e" stroke="#f4e3da" strokeWidth="1.500" /></svg></NavButton>
                    <NavButton aria-label="Extension"><svg width="16" height="16" fill="#88878a"><circle cx="8" cy="4.500" r="3.500" /><path d="M4 1l2 2M12 1l-2 2" stroke="#88878a" strokeWidth="1.500" /><path d="M2 10h5v5H2zM9 10h5v5H9z" /><path d="M7 8h2v3H7z" /></svg></NavButton>
                    <NavButton aria-label="Extensions"><Puzzle size={16} fill="#fff" /></NavButton>
                    <NavButton aria-label="Side panel"><svg width="15" height="15"><rect width="15" height="15" fill="#f4f4f4" /><rect x="2" y="2" width="7" height="11" fill="#39373a" /></svg></NavButton>
                    <NavButton aria-label="Account"><Initial>M</Initial></NavButton>
                    <NavButton aria-label="Menu"><svg width="4" height="16" fill="#eee"><circle cx="2" cy="3" r="1.400" /><circle cx="2" cy="8" r="1.400" /><circle cx="2" cy="13" r="1.400" /></svg></NavButton>
                  </AddressRow>

                  <Bookmarks aria-label="Bookmarks">
                    {bookmarks.map(([label, icon]) => <Bookmark key={label} href="#">{icon}{label}</Bookmark>)}
                  </Bookmarks>

                  <Banner>
                    <p>Get faster access to your boards by using Miro apps.</p>
                    <InstallButton>Install apps</InstallButton>
                    <button aria-label="Dismiss"><X size={18} strokeWidth={1.800} /></button>
                  </Banner>

                  <Board>
                    <Diagram />
                    <Column $x={322} $y={7} $w={270}>
                      {backlog.map((c, i) => (
                        <Card key={i} $color={c.color} $tall={c.text.includes("\n")}>
                          {c.text}
                          {c.tail && <CardTail>{c.tail}</CardTail>}
                          {c.open && (
                            <Expand aria-label="Open card">
                              <svg width="14" height="14" fill="none" stroke="#fff" strokeWidth="1.300"><path d="M8 6l4-4M8.500 2H12v3.500M6 8l-4 4M2 8.500V12h3.500" /></svg>
                            </Expand>
                          )}
                        </Card>
                      ))}
                    </Column>
                    <Column $x={1023} $y={-11} $w={259}>
                      <Card $small $color={blue}>Distributed Session Management</Card>
                      <Card $small $color={blue}>Student Transfer</Card>
                      <Card $small $color={blue}>School Profile Update</Card>
                    </Column>
                    <Column $x={1428} $y={-11} $w={259}>
                      <Card $small $color={blue}>Azure Devops Bil</Card>
                      <Card $small $color={blue}>GCP Billing Setup</Card>
                    </Column>
                    <Cursor width="36" height="36" fill="#fff" stroke="#6c6458" strokeWidth="1.200">
                      <path d={hand} transform="translate(11 13) rotate(8)" />
                      <path d={hand} transform="translate(1 3) rotate(-4)" />
                    </Cursor>

                    <ScrollX />
                    <ScrollY />

                    <PanelRow>
                      <Panel>
                        <Tool $w={79} aria-label="Miro home"><Wordmark>miro</Wordmark></Tool>
                        <Plan>free</Plan>
                        <Rule $tail={9} />
                        <Tool $w={140}><BoardName>DMS Worksheet</BoardName></Tool>
                        <Rule $lead={8} $tail={3} />
                        <Tool aria-label="Settings"><Line size={22} sw={1.700}><path d="M10 1.200l2.500 2.600 3.700-.2.400 3.600L18.500 10l-1.900 2.800-.4 3.600-3.700-.2L10 18.800l-2.500-2.600-3.700.2-.4-3.600L1.500 10l1.900-2.800.4-3.600 3.700.2z" /><circle cx="10" cy="10" r="1.300" fill="currentColor" /></Line></Tool>
                        <Tool aria-label="Export"><Line size={22} sw={1.700}><path d="M10 14V2M6 6l4-4 4 4M2 13v5h16v-5" /></Line></Tool>
                        <Tool aria-label="Find"><Search size={22} strokeWidth={1.800} /></Tool>
                      </Panel>
                      <Panel>
                        <Tool aria-label="Collapse"><ChevronRight size={16} /></Tool>
                        <Tool aria-label="Timer"><Line size={23} sw={1.700}><circle cx="10" cy="11" r="7.800" /><path d="M10 3V1M10 11l3-3" /><circle cx="10" cy="11" r="1" fill="currentColor" /></Line></Tool>
                        <Tool aria-label="Voting"><Line size={23} sw={1.700}><path d="M18 9V2H2v16h16v-4" /><circle cx="12" cy="14" r="2" fill="currentColor" /><circle cx="18" cy="11" r="1.500" fill="currentColor" /></Line></Tool>
                        <Tool aria-label="Focus"><Line size={23} sw={1.700}><path d="M2 6V2h4M14 2h4v4M18 14v4h-4M6 18H2v-4" /><circle cx="10" cy="10" r="3" fill="currentColor" /></Line></Tool>
                        <Tool aria-label="Estimation"><svg width="22" height="22" viewBox="0 0 22 22"><rect x="4" y="2" width="14" height="18" rx="1" fill="none" stroke="currentColor" strokeWidth="1.800" /><text x="11" y="15" textAnchor="middle" fontSize="12" fontWeight="700" fill="currentColor">3</text></svg></Tool>
                        <Tool aria-label="Notes"><Line size={22} sw={1.700}><path d="M2.500 1.500h15v17h-15zM6 6h8M6 9h8M6 12h8M6 15h4" /></Line></Tool>
                        <Tool aria-label="More tools"><ChevronsDown size={20} /></Tool>
                      </Panel>
                      <Panel>
                        <Tool $lit aria-label="Cursors"><svg width="26" height="24" viewBox="0 0 26 24"><path d="M2 6l14 6-6 2-3 7z" fill="#1a91f5" /><path d="M12 3h13M17 8h5" stroke="#1a91f5" strokeWidth="2" /></svg></Tool>
                        <Tool aria-label="Reactions"><Line size={24} sw={1.500}><path d="M2 18.500L7.500 6l6.500 7zM4.500 13l3 3.200M6 9.500l5 5M11 6V3M13.500 8l3-3.500M14.500 10.500h3M13.500 2h.2M17.500 2h.2M18.500 7h.2" /></Line></Tool>
                        <Tool aria-label="Comments"><Line size={22} sw={1.700}><path d="M1.500 2.500h17v13H12l-2 2.500-2-2.500H1.500zM8 7.500h6M8 11h6M5 7.500h.3M5 11h.3" /></Line></Tool>
                        <Member>M</Member>
                        <Tool aria-label="Notifications"><Bell size={22} strokeWidth={1.800} /></Tool>
                        <ViewOnly><Eye size={20} /> View only <ChevronDown size={13} strokeWidth={2.500} /></ViewOnly>
                      </Panel>
                    </PanelRow>

                    <Palette>
                      {paletteTools.map(([label, icon], i) => <PaletteTool key={label} $on={i === 0} aria-label={label}>{icon}</PaletteTool>)}
                    </Palette>
                    <MiniMap>
                      <PaletteTool aria-label="Mini map"><Line size={22} sw={1.500}><path d="M1 1.500h18v17H1zM5 5h5v5H5z" /></Line></PaletteTool>
                    </MiniMap>
                    <ZoomBar>
                      <button aria-label="Zoom out"><Minus size={18} strokeWidth={1.500} /></button>
                      100%
                      <button aria-label="Zoom in"><Plus size={18} strokeWidth={1.500} /></button>
                      <HelpButton>?</HelpButton>
                    </ZoomBar>
                  </Board>
                </Browser>
                <ShareControls>
                  <ShareChip>Mohit Soni</ShareChip>
                  <ShareChip $tools>
                    <button aria-label="Zoom out"><Minus size={17} strokeWidth={1.500} color="#a8a8a8" /></button>
                    <button aria-label="Zoom in"><Plus size={17} strokeWidth={1.500} /></button>
                  </ShareChip>
                </ShareControls>
              </ShareArea>

              <People>
                <Person>
                  <FaceArea><Face $size={175} $bg="#e3deed" $fg="#443a63" $speaking>MS</Face></FaceArea>
                  <PersonName>Mohit Soni</PersonName>
                </Person>
                <Person>
                  <FaceArea><Face $size={165} $bg="#dae2d8" $fg="#30421f">S</Face></FaceArea>
                  <PersonName>Suhas <MicOff size={14} back="#1f1f1f" /></PersonName>
                </Person>
                <Person>
                  <FaceArea><Face $size={165} $bg="#ccece0" $fg="#00643d">PP</Face></FaceArea>
                  <PersonName>Pravin Pawar</PersonName>
                </Person>
                <SelfView><Face $size={56} $bg="#cdd9e0" $fg="#06333f">LM</Face></SelfView>
              </People>
            </Stage>
          </Meeting>
        </Window>
      </Desktop>
    </>
  );
}
